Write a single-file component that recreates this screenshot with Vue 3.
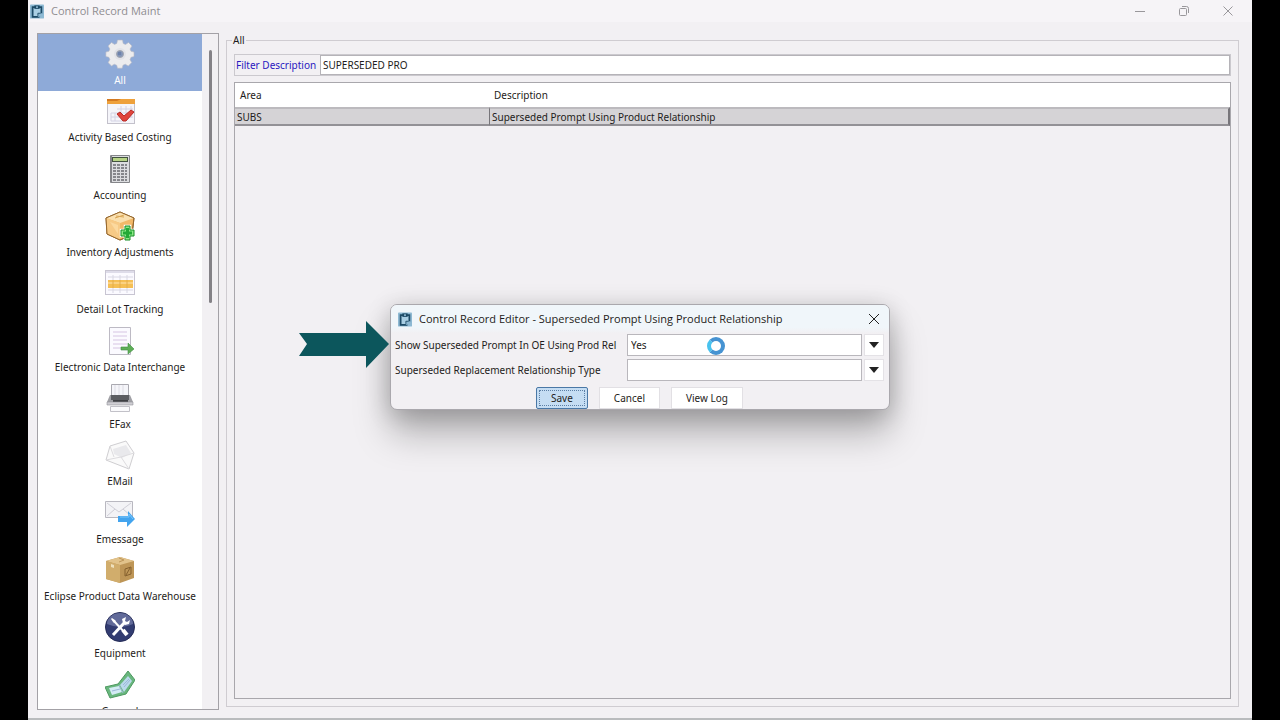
<template>
  <div class="screen">
    <div class="window">
      <!-- Title bar -->
      <header class="title-bar">
        <svg class="app-icon" viewBox="0 0 16 16">
          <rect width="16" height="16" rx="1" fill="#8db9d3" />
          <path d="M3 3h10v7l-3 4H3z" fill="#a9cfe4" stroke="#1c4a66" stroke-width="2" />
          <path d="M5 1h6v4H5z" fill="#1c4a66" />
          <path d="M7 2h2v2H7zM9 10h5v4H9z" fill="#8db9d3" />
          <path d="M9 13v-3h3" fill="none" stroke="#1c4a66" />
        </svg>
        <h1 class="window-title">Control Record Maint</h1>
        <div class="window-controls">
          <button type="button" class="window-button" aria-label="Minimize">
            <svg viewBox="0 0 12 12"><path d="M1 6.500h10" /></svg>
          </button>
          <button type="button" class="window-button" aria-label="Restore">
            <svg viewBox="0 0 12 12">
              <rect x="1.500" y="3.500" width="7" height="7" rx="1" />
              <path d="M4 1.500h4.500a2 2 0 0 1 2 2V8" />
            </svg>
          </button>
          <button type="button" class="window-button" aria-label="Close">
            <svg viewBox="0 0 12 12"><path d="M1.500 1.500l9 9M10.500 1.500l-9 9" /></svg>
          </button>
        </div>
      </header>

      <div class="window-body">
        <!-- Categories -->
        <nav class="sidebar">
          <div class="category-list">
            <button
              v-for="category in categories"
              :key="category.name"
              type="button"
              class="category"
              :class="{ selected: category.name === selectedCategory }"
              @click="selectedCategory = category.name"
            >
              <svg class="category-icon" viewBox="0 0 30 30" v-html="category.icon"></svg>
              <span class="category-name">{{ category.name }}</span>
            </button>
          </div>
          <div class="scroll-track"><div class="scroll-thumb"></div></div>
        </nav>

        <!-- Records -->
        <fieldset class="records">
          <legend>{{ selectedCategory }}</legend>
          <div class="filter-row">
            <label for="filter" class="filter-label">Filter Description</label>
            <input id="filter" v-model="filter" type="text" class="filter-input" />
          </div>
          <div class="table-box">
            <table class="record-table">
              <thead>
                <tr>
                  <th class="area-column">Area</th>
                  <th>Description</th>
                </tr>
              </thead>
              <tbody>
                <tr v-for="record in filteredRecords" :key="record.description">
                  <td>{{ record.area }}</td>
                  <td class="focused-cell">{{ record.description }}</td>
                </tr>
              </tbody>
            </table>
          </div>
        </fieldset>
      </div>

      <!-- Editor dialog -->
      <div class="overlay">
        <section class="dialog" role="dialog" aria-labelledby="dialog-title">
          <svg class="pointer-arrow" viewBox="0 0 90 47">
            <path d="M0 12h67V0l23 23-23 24V35H0l8-12z" fill="#0c565c" />
          </svg>
          <header class="dialog-header">
            <svg class="dialog-icon" viewBox="0 0 16 16">
              <rect width="16" height="16" rx="1" fill="#8db9d3" />
              <path d="M3 3h10v7l-3 4H3z" fill="#a9cfe4" stroke="#1c4a66" stroke-width="2" />
              <path d="M5 1h6v4H5z" fill="#1c4a66" />
              <path d="M7 2h2v2H7zM9 10h5v4H9z" fill="#8db9d3" />
              <path d="M9 13v-3h3" fill="none" stroke="#1c4a66" />
            </svg>
            <h2 id="dialog-title" class="dialog-title">
              Control Record Editor - Superseded Prompt Using Product Relationship
            </h2>
            <button type="button" class="dialog-close" aria-label="Close">
              <svg viewBox="0 0 12 12"><path d="M1 1l10 10M11 1L1 11" /></svg>
            </button>
          </header>
          <form class="dialog-form" @submit.prevent>
            <div class="form-row">
              <label for="show-prompt">Show Superseded Prompt In OE Using Prod Rel</label>
              <div class="combo">
                <select id="show-prompt" v-model="showPrompt">
                  <option>Yes</option>
                  <option>No</option>
                </select>
                <span class="combo-arrow"></span>
                <span class="spinner"></span>
              </div>
            </div>
            <div class="form-row">
              <label for="relationship-type">Superseded Replacement Relationship Type</label>
              <div class="combo">
                <select id="relationship-type" v-model="relationshipType">
                  <option value=""></option>
                </select>
                <span class="combo-arrow"></span>
              </div>
            </div>
            <div class="dialog-actions">
              <button type="submit" class="action-button primary">Save</button>
              <button type="button" class="action-button">Cancel</button>
              <button type="button" class="action-button">View Log</button>
            </div>
          </form>
        </section>
      </div>
    </div>
  </div>
</template>

<script setup>
import { ref, computed } from 'vue'

const selectedCategory = ref('All')
const filter = ref('SUPERSEDED PRO')
const showPrompt = ref('Yes')
const relationshipType = ref('')

const records = [
  { area: 'SUBS', description: 'Superseded Prompt Using Product Relationship' }
]

const filteredRecords = computed(() =>
  records.filter((r) => r.description.toUpperCase().includes(filter.value.toUpperCase()))
)

const categories = [
  {
    name: 'All',
    icon: `<g fill="#ececee" stroke="#b9bbc4" stroke-width=".6"><path d="M12.500 1h5l.7 3.500 2.300 1 3-2 3.500 3.500-2 3 1 2.300 3 .7v4.500l-3 .8-1 2.400 1.700 2.800-3.400 3.500-3-1.800-2.300 1-.8 3h-4.700l-.8-3-2.400-1-2.800 1.700-3.400-3.300 1.800-3-1-2.300-3-.8V13l3-.7 1-2.300-1.800-3L6.500 3.500l3 1.900 2.300-1z"/></g><circle cx="15" cy="15" r="6" fill="#e2e3e8"/><circle cx="15" cy="15" r="3.500" fill="#8295b8" stroke="#a5a8b0"/><path d="M13 13h3v3h-3z" fill="#6d82ab"/>`
  },
  {
    name: 'Activity Based Costing',
    icon: `<rect x="2.500" y="3.500" width="27" height="24" fill="#f5f5fa" stroke="#c3c1cb"/><path d="M2 3h28v5H2z" fill="#eea13c"/><path d="M2 3h14l-4 2H2z" fill="#d37a22"/><path d="M16 10v12M21 10v12M26 10v12M12 13h16M6 17h22M6 21h22M6 25h12M6 17v8M10 17v8" stroke="#d4d3e4" fill="none"/><path d="M12 18l3-2 4 4 7-6 3 2-8 9h-3z" fill="#e0453c" stroke="#b82b27"/>`
  },
  {
    name: 'Accounting',
    icon: `<rect x="5" y="1" width="20" height="28" rx="1" fill="#85868a"/><rect x="7" y="2" width="17" height="26" fill="#dcdde0"/><rect x="7" y="3" width="16" height="5" fill="#42523f"/><rect x="8" y="4" width="14" height="3" fill="#b7d486"/><path d="M8 11h14M8 14h14M8 17h14M8 20h14M8 23h14M8 26h14" stroke="#6a6b70" stroke-width="1.500" stroke-dasharray="3 1"/>`
  },
  {
    name: 'Inventory Adjustments',
    icon: `<path d="M15 1l14 6-2 17-12 5-13-6L1 7z" fill="#f2b868" stroke="#96672d"/><path d="M1 7l14 5 14-5-14-6z" fill="#fae0af"/><path d="M1 7l14 5v17L2 23z" fill="#f7ca86"/><path d="M11 5l8 1M19 4l-9 3" stroke="#d9a655" fill="none"/><path d="M1 7l14-6 14 6-2 17-12 5-13-6z" fill="none" stroke="#96672d"/><path d="M5 11l8 3v9z" fill="#ffe2af" opacity=".6"/><path d="M20 15h5v4h4v6h-4v4h-5v-4h-4v-6h4z" fill="#51c64e" stroke="#fff" stroke-width="2.500"/><path d="M20 15h5v4h4v6h-4v4h-5v-4h-4v-6h4z" fill="#8be886" stroke="#178d27"/><path d="M22.500 17v10M18 22h9" stroke="#22a936" stroke-width="3"/>`
  },
  {
    name: 'Detail Lot Tracking',
    icon: `<rect x=".5" y="2.500" width="29" height="24" fill="#fbfaff" stroke="#c8c5d2"/><path d="M1 3h28v2H1z" fill="#dedce9"/><path d="M3 9h25M3 22h25M8 7v18M15 7v18M22 7v18" stroke="#d9d8e4"/><path d="M3 12h25v8H3z" fill="#f5bf55"/><path d="M3 15h25" stroke="#fbd283" stroke-width="2"/><path d="M8 12v8M15 12v8M22 12v8" stroke="#e4ad4d"/>`
  },
  {
    name: 'Electronic Data Interchange',
    icon: `<path d="M4.500 1.500h21v27h-21z" fill="#fbfaff" stroke="#bdbac4"/><path d="M8 6h14M8 10h14M8 14h14M8 18h14M8 22h10" stroke="#d6c4e3"/><path d="M16 21h7v-4l6 6-6 5v-4h-7z" fill="#5eae57" stroke="#3e8f3f" stroke-width=".6"/>`
  },
  {
    name: 'EFax',
    icon: `<path d="M6.500 1.500h17v14h-17z" fill="#f5f5f9" stroke="#aaa9b0"/><path d="M10 2v10M14 2v10M18 2v10" stroke="#dddce4"/><path d="M5 12h20l3 7H2z" fill="#a0a0a5"/><path d="M6 12h18v5H6z" fill="#5c5d61"/><path d="M8 17h15v3H8z" fill="#3e3f43"/><path d="M2 19h26v3H2z" fill="#cfced3" stroke="#94949a" stroke-width=".6"/><path d="M5.500 23.500h19v5h-19z" fill="#fafafc" stroke="#c2c1c8"/>`
  },
  {
    name: 'EMail',
    icon: `<path d="M5 6l16-5 8 12-5 16L1 20z" fill="#fafafa" stroke="#cfced1"/><path d="M8 9l13-4 5 8-9 5-8-4z" fill="#e9e9ec"/><path d="M1 20l15-3 8 12M5 6l4 11M29 13l-13 4" fill="none" stroke="#dddcdf"/>`
  },
  {
    name: 'Emessage',
    icon: `<path d="M.5 3.500h27v16H.5z" fill="#f3f3f6" stroke="#b9b8c0"/><path d="M2 5l12 9L26 5M2 18l8-7M26 18l-8-7" fill="none" stroke="#cfced6"/><path d="M13 18h10v-5l7 8-8 8v-5h-9z" fill="#43a4ee"/><path d="M15 19h9v-3l4 5" fill="none" stroke="#7ec7fa"/>`
  },
  {
    name: 'Eclipse Product Data Warehouse',
    icon: `<path d="M1 6l14-4 14 4v17l-14 5-14-4z" fill="#be9657"/><path d="M1 6l14 4 14-4-14-4z" fill="#e2c38b"/><path d="M1 6l14 4v18L1 24z" fill="#d1ad6c"/><path d="M14 3l5 2-5 2" fill="none" stroke="#bd965a"/><path d="M6 9l3 1v3l-3-1z" fill="#eee0bc"/><path d="M20 14l6-2v7l-6 2z" fill="none" stroke="#85602e"/><path d="M21 20l4-7" stroke="#85602e"/>`
  },
  {
    name: 'Equipment',
    icon: `<circle cx="15" cy="15" r="14.500" fill="#323c71" stroke="#252c57"/><path d="M2 12a13 11 0 0 1 26 0q-12 6-26 0" fill="#7b83af" opacity=".65"/><path d="M8 8l13 14" stroke="#fff" stroke-width="2"/><path d="M18 18l4 5" stroke="#fff" stroke-width="4"/><path d="M8 23l12-13" stroke="#fff" stroke-width="3"/><path d="M18 11l-1-4 4-2-1 4 2 1 3-2-1 4-4 1z" fill="#fff"/><path d="M7 6l4 3-2 2-3-4z" fill="#fff"/>`
  },
  {
    name: 'General',
    icon: `<path d="M0 17l13-3L23 1l7 9-9 14-16 4z" fill="#69b77e" stroke="#4d9960"/><path d="M4 18l10-2 3 6-10 3z" fill="#d3ebf4"/><path d="M15 15l8-9 4 5-8 11z" fill="#bad9ec"/><path d="M14 15l4 8M7 21l8-2M18 15l6-6M19 17l6-7" stroke="#9cb7d8"/>`
  }
]
</script>

<style>
body {
  background: #000;
}
</style>

<style scoped>
.screen {
  height: 100vh;
  padding: 0 28px;
  box-sizing: border-box;
  background: #000;
  font-family: "Noto Sans", sans-serif;
  font-size: 10px;
  line-height: 14px;
  color: #1e1c20;
}

button,
input,
select {
  font: inherit;
  color: inherit;
  margin: 0;
  box-sizing: border-box;
}

.window {
  position: relative;
  display: flex;
  flex-direction: column;
  height: 100%;
  box-sizing: border-box;
  background: #f2f0f3;
  border-bottom: 2px solid #b9bbbd;
}

.title-bar {
  display: flex;
  align-items: center;
  height: 22px;
  padding: 0 2px;
  background: #f6f4f7;
}

.app-icon,
.dialog-icon {
  width: 14px;
  height: 15px;
  flex: none;
}

.window-title {
  flex: 1;
  margin: 0 0 0 7px;
  font-family: "Open Sans", sans-serif;
  font-size: 11px;
  line-height: 16px;
  font-weight: 400;
  color: #8f8d91;
}

.window-controls {
  display: flex;
}

.window-button {
  display: flex;
  align-items: center;
  justify-content: center;
  width: 44px;
  height: 22px;
  padding: 0;
  border: none;
  background: none;
}

.window-button svg,
.dialog-close svg {
  width: 12px;
  height: 12px;
  fill: none;
  stroke: #99979b;
}

.window-body {
  display: flex;
  flex: 1;
  gap: 7px;
  min-height: 0;
  padding: 11px 13px 8px 9px;
}

/* Categories */
.sidebar {
  display: flex;
  flex: none;
  width: 182px;
  box-sizing: border-box;
  border: 1px solid #a3a1a6;
}

.category-list {
  flex: 1;
  overflow: hidden;
  background: #fff;
}

.category {
  display: flex;
  flex-direction: column;
  align-items: center;
  gap: 4px;
  width: 100%;
  height: 57px;
  padding: 5px 0 0;
  border: none;
  background: none;
  white-space: nowrap;
}

.category:nth-child(3n + 2) {
  height: 58px;
}

.category.selected {
  background: #8eaad8;
  color: #fff;
}

.category-icon {
  width: 30px;
  height: 30px;
  flex: none;
}

.scroll-track {
  display: flex;
  justify-content: center;
  width: 16px;
  padding-top: 16px;
}

.scroll-thumb {
  width: 3px;
  height: 253px;
  border-radius: 2px;
  background: #848287;
}

/* Records */
.records {
  display: flex;
  flex-direction: column;
  flex: 1;
  min-width: 0;
  margin: 0 0 3px;
  padding: 7px;
  border: 1px solid #cfccd1;
}

.records legend {
  padding: 0 1px;
  margin-left: -2px;
}

.filter-row {
  display: flex;
  height: 22px;
  box-sizing: border-box;
  border: 1px solid #cbc9ce;
}

.filter-label {
  width: 85px;
  padding: 3px 1px;
  box-sizing: border-box;
  white-space: nowrap;
  color: #2a18c0;
}

.filter-input {
  flex: 1;
  min-width: 0;
  padding: 0 2px;
  border: 1px solid #b5b3b8;
  background: #fff;
  outline: none;
}

.table-box {
  flex: 1;
  margin-top: 6px;
  border: 1px solid #a9a7ac;
}

.record-table {
  width: 100%;
  table-layout: fixed;
  border-collapse: separate;
  border-spacing: 0;
}

.record-table th {
  height: 24px;
  padding: 0 5px;
  background: #fff;
  font-weight: 400;
  text-align: left;
}

.area-column {
  width: 244px;
}

.record-table td {
  height: 15px;
  padding: 0 2px;
  border-top: 2px solid #bcbabe;
  border-bottom: 2px solid #939196;
  background: #d5d3d6;
}

.record-table .focused-cell {
  border-left: 1px solid #77757a;
  border-right: 2px solid #77757a;
}

/* Editor dialog */
.overlay {
  position: absolute;
  inset: 0;
  display: flex;
  align-items: center;
  justify-content: center;
  padding-bottom: 4px;
}

.dialog {
  position: relative;
  width: 500px;
  box-sizing: border-box;
  border: 1px solid #aaa8ad;
  border-radius: 7px;
  background: #f2f0f3;
  box-shadow: 0 24px 36px rgba(0, 0, 0, 0.26), 0 4px 24px rgba(0, 0, 0, 0.2);
}

.pointer-arrow {
  position: absolute;
  right: 100%;
  top: 16px;
  width: 90px;
  height: 47px;
  margin-right: 2px;
}

.dialog-header {
  display: flex;
  align-items: center;
  height: 28px;
  padding: 0 9px 0 7px;
  border-radius: 6px 6px 0 0;
  background: linear-gradient(#f0f6fa 80%, #f2f0f3);
}

.dialog-title {
  flex: 1;
  margin: 0 0 0 7px;
  font-family: "Open Sans", sans-serif;
  font-size: 11px;
  line-height: 16px;
  font-weight: 400;
  white-space: nowrap;
}

.dialog-close {
  display: flex;
  padding: 0;
  border: none;
  background: none;
}

.dialog-close svg {
  stroke: #222;
}

.dialog-form {
  display: flex;
  flex-direction: column;
  gap: 3px;
  padding: 1px 5px 0 4px;
}

.form-row {
  display: flex;
  align-items: center;
  justify-content: space-between;
  white-space: nowrap;
}

.combo {
  position: relative;
  display: flex;
  flex: none;
  gap: 2px;
  width: 257px;
  height: 22px;
}

.combo select {
  flex: 1;
  padding: 0 3px;
  border: 1px solid #b9b7bc;
  border-radius: 0;
  background: #fff;
  appearance: none;
  outline: none;
}

.combo-arrow {
  display: flex;
  align-items: center;
  justify-content: center;
  width: 20px;
  background: #fff;
  box-shadow: inset 0 0 0 1px #e4e2e6;
}

.combo-arrow::after {
  content: "";
  border: 5px solid transparent;
  border-top: 6px solid #222;
  border-bottom: 0;
}

.spinner {
  position: absolute;
  left: 80px;
  top: 3px;
  width: 18px;
  height: 18px;
  box-sizing: border-box;
  border: 4px solid #4693d2;
  border-left-color: #48c2ee;
  border-radius: 50%;
}

.dialog-actions {
  display: flex;
  gap: 11px;
  padding: 3px 0 0 141px;
}

.action-button {
  height: 22px;
  padding: 0 14px;
  border: 1px solid #e2e0e4;
  background: #fff;
}

.action-button.primary {
  border: 1px solid #4a78a6;
  border-radius: 2px;
  background: #c5ddf3;
  outline: 1px dotted #5c7fa5;
  outline-offset: -4px;
}
</style>
